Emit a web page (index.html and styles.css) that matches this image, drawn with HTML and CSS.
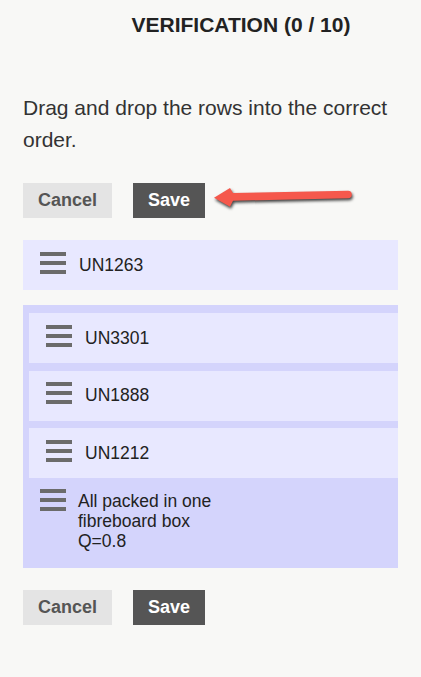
FILE: index.html
```html
<!DOCTYPE html>
<html>
<head>
<meta charset="utf-8">
<link rel="stylesheet" href="styles.css">
</head>
<body>
<div class="page">
  <h1 class="title">VERIFICATION (0 / 10)</h1>
  <p class="intro">Drag and drop the rows into the correct order.</p>
  <div class="actions top">
    <button class="btn cancel">Cancel</button>
    <button class="btn save">Save</button>
    <svg class="pointer" width="150" height="30" viewBox="0 0 150 30">
      <path d="M4,14.7 L20,5 L23,10 L138,7.7 A3.8,3.8 0 0 1 138,15.3 L23,17.7 L20,23.7 Z" fill="#f5584c"/>
    </svg>
  </div>
  <div class="row single">
    <svg class="grip" width="26" height="22" viewBox="0 0 26 22"><rect x="0" y="0" width="26" height="4"/><rect x="0" y="9" width="26" height="4"/><rect x="0" y="18" width="26" height="4"/></svg>
    <span class="label">UN1263</span>
  </div>
  <div class="group">
    <div class="row">
      <svg class="grip" width="26" height="22" viewBox="0 0 26 22"><rect x="0" y="0" width="26" height="4"/><rect x="0" y="9" width="26" height="4"/><rect x="0" y="18" width="26" height="4"/></svg>
      <span class="label">UN3301</span>
    </div>
    <div class="row">
      <svg class="grip" width="26" height="22" viewBox="0 0 26 22"><rect x="0" y="0" width="26" height="4"/><rect x="0" y="9" width="26" height="4"/><rect x="0" y="18" width="26" height="4"/></svg>
      <span class="label">UN1888</span>
    </div>
    <div class="row">
      <svg class="grip" width="26" height="22" viewBox="0 0 26 22"><rect x="0" y="0" width="26" height="4"/><rect x="0" y="9" width="26" height="4"/><rect x="0" y="18" width="26" height="4"/></svg>
      <span class="label">UN1212</span>
    </div>
    <div class="group-head">
      <svg class="grip" width="26" height="22" viewBox="0 0 26 22"><rect x="0" y="0" width="26" height="4"/><rect x="0" y="9" width="26" height="4"/><rect x="0" y="18" width="26" height="4"/></svg>
      <span class="label multi">All packed in one fibreboard box Q=0.8</span>
    </div>
  </div>
  <div class="actions bottom">
    <button class="btn cancel">Cancel</button>
    <button class="btn save">Save</button>
  </div>
</div>
</body>
</html>
```
FILE: styles.css
```css
html, body {
  margin: 0;
  padding: 0;
  background: #f8f8f6;
}
body {
  font-family: "Liberation Sans", Arial, sans-serif;
  color: #333;
}
.page {
  padding: 0 23px 40px 23px;
}
.title {
  margin: 13px 0 0 61px;
  font-size: 21px;
  line-height: 24px;
  font-weight: bold;
  color: #222;
  text-align: center;
}
.intro {
  margin: 55px 0 0 0;
  font-size: 21px;
  line-height: 32px;
  color: #333;
}
.actions {
  display: flex;
  gap: 21px;
  position: relative;
}
.actions.top {
  margin-top: 27px;
}
.actions.bottom {
  margin-top: 22px;
}
.btn {
  border: none;
  height: 35px;
  padding: 0 15px;
  font-family: "Liberation Sans", Arial, sans-serif;
  font-size: 18px;
  font-weight: bold;
  line-height: 35px;
}
.cancel {
  background: #e4e4e4;
  color: #555;
  width: 89px;
}
.save {
  background: #555;
  color: #fff;
  width: 72px;
}
.pointer {
  position: absolute;
  left: 187px;
  top: 0px;
  filter: drop-shadow(1px 2px 1.5px rgba(0,0,0,0.75));
}
.row {
  display: flex;
  align-items: center;
  height: 50px;
  background: #e8e8ff;
  padding-left: 17px;
  box-sizing: border-box;
}
.row.single {
  margin-top: 22px;
}
.grip {
  flex: none;
  fill: #6b6b6b;
  margin-right: 13px;
  margin-top: -5px;
}
.label {
  font-size: 17.5px;
  color: #222;
}
.group {
  margin-top: 15px;
  background: #d4d4fc;
  padding: 8px 0 0 6px;
  display: flex;
  flex-direction: column;
  gap: 7.5px;
}
.group-head {
  display: flex;
  align-items: flex-start;
  margin-left: -6px;
  margin-top: -7.5px;
  padding: 11px 17px 0 17px;
  height: 90px;
  box-sizing: border-box;
}
.group-head .grip {
  margin-top: 0;
  margin-right: 12px;
}
.label.multi {
  max-width: 150px;
  line-height: 20px;
  margin-top: 2px;
}
```
